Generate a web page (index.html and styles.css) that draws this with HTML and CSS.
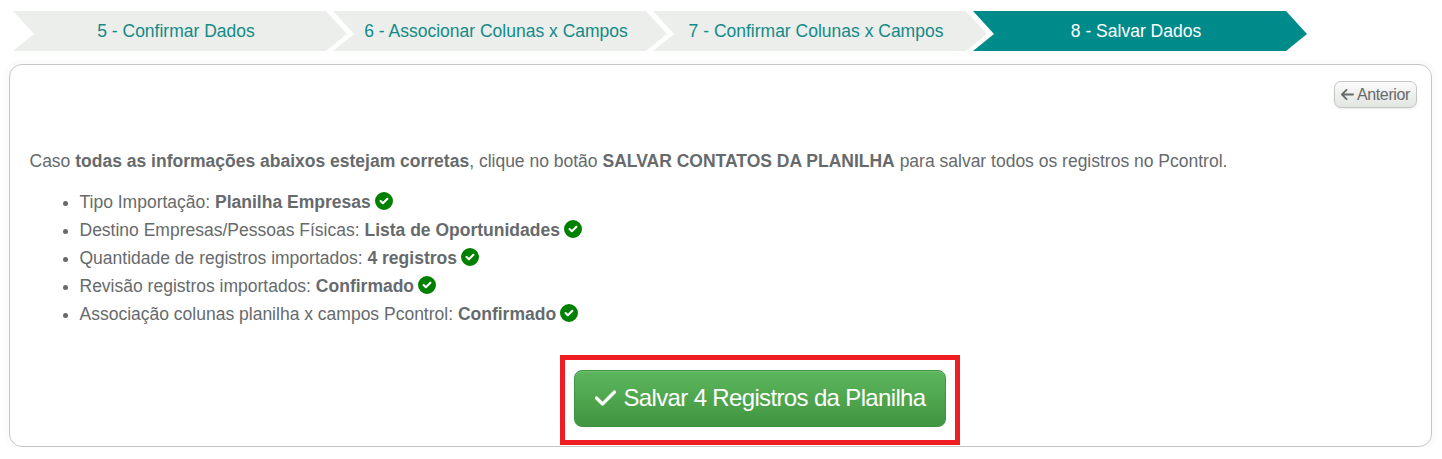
FILE: index.html
```html
<!DOCTYPE html>
<html lang="pt-BR">
<head>
<meta charset="utf-8">
<title>Importar planilha</title>
<link rel="stylesheet" href="styles.css">
</head>
<body>
<svg class="sprite" aria-hidden="true">
  <symbol id="circle-check" viewBox="0 0 512 512"><path d="M256 512a256 256 0 1 0 0-512 256 256 0 1 0 0 512zM374 214L246 342c-12 12-31 12-43 0l-66-66c-12-12-12-31 0-43s31-12 43 0l45 45L331 171c12-12 31-12 43 0s12 31 0 43z"/></symbol>
  <symbol id="check" viewBox="0 0 448 512"><path stroke="currentColor" stroke-width="10" d="M438.600 105.400c12.500 12.500 12.500 32.800 0 45.300l-256 256c-12.500 12.500-32.800 12.500-45.300 0l-128-128c-12.500-12.500-12.500-32.800 0-45.300s32.800-12.500 45.300 0L160 338.700 393.400 105.400c12.500-12.500 32.800-12.500 45.300 0z"/></symbol>
  <symbol id="arrow-left" viewBox="0 0 448 512"><path d="M9.400 233.400c-12.500 12.500-12.500 32.800 0 45.300l160 160c12.500 12.500 32.800 12.500 45.300 0s12.500-32.800 0-45.300L109.200 288 416 288c17.700 0 32-14.300 32-32s-14.300-32-32-32l-306.700 0L214.600 118.600c12.500-12.500 12.500-32.800 0-45.300s-32.800-12.500-45.300 0l-160 160z"/></symbol>
</svg>
<nav class="steps">
  <div class="step">5 - Confirmar Dados</div>
  <div class="step">6 - Associonar Colunas x Campos</div>
  <div class="step">7 - Confirmar Colunas x Campos</div>
  <div class="step step-active">8 - Salvar Dados</div>
</nav>
<main class="panel">
  <div class="toolbar">
    <button class="btn-back"><svg class="icon-arrow"><use href="#arrow-left"/></svg>Anterior</button>
  </div>
  <p class="intro">Caso <b>todas as informações abaixos estejam corretas</b>, clique no botão <b>SALVAR CONTATOS DA PLANILHA</b> para salvar todos os registros no Pcontrol.</p>
  <ul class="summary">
    <li>Tipo Importação: <b>Planilha Empresas</b> <svg class="icon-ok"><use href="#circle-check"/></svg></li>
    <li>Destino Empresas/Pessoas Físicas: <b>Lista de Oportunidades</b> <svg class="icon-ok"><use href="#circle-check"/></svg></li>
    <li>Quantidade de registros importados: <b>4 registros</b> <svg class="icon-ok"><use href="#circle-check"/></svg></li>
    <li>Revisão registros importados: <b>Confirmado</b> <svg class="icon-ok"><use href="#circle-check"/></svg></li>
    <li>Associação colunas planilha x campos Pcontrol: <b>Confirmado</b> <svg class="icon-ok"><use href="#circle-check"/></svg></li>
  </ul>
  <div class="highlight">
    <button class="btn-save"><svg class="icon-check"><use href="#check"/></svg>Salvar 4 Registros da Planilha</button>
  </div>
</main>
</body>
</html>
```
FILE: styles.css
```css
* { box-sizing: border-box; }
body {
  margin: 0;
  padding: 11px 10px 0 9px;
  background: #fff;
  color: #666a6c;
  font: 17.5px/28px "Liberation Sans", Arial, sans-serif;
}
svg { fill: currentColor; }
.sprite { display: none; }
.steps { display: flex; margin-left: 4px; }
.step {
  flex: none;
  width: 334px;
  height: 40px;
  margin-right: -14px;
  padding-right: 8px;
  background: #ebeeeb;
  color: #138a87;
  line-height: 40px;
  text-align: center;
  white-space: nowrap;
  clip-path: polygon(0 0, 313px 0, 334px 23px, 313px 100%, 0 100%, 21px 23px);
}
.step-active { background: #008b8b; color: #fff; }
.panel {
  height: 383px;
  margin-top: 13px;
  padding: 16px 14px 0 19.5px;
  border: 1px solid #c5c5c5;
  border-radius: 13px;
  box-shadow: 0 0 0 4px #fafbfa;
}
.toolbar { display: flex; justify-content: flex-end; }
.btn-back {
  display: flex;
  align-items: center;
  justify-content: center;
  gap: 3px;
  width: 83px;
  height: 27px;
  padding: 0;
  border: 1px solid #c4c7c4;
  border-radius: 7px;
  background: linear-gradient(#fafbfa, #e2e5e2);
  box-shadow: 0 1px 2px #e8e8e8;
  color: #666a6c;
  font: 16px/25px "Liberation Sans", Arial, sans-serif;
  letter-spacing: -0.35px;
}
.icon-arrow { width: 13px; height: 15px; }
.intro { margin: 39px 0 13px; white-space: nowrap; }
.summary { margin: 0; padding: 0 0 0 50px; }
.icon-ok { width: 18px; height: 18px; margin-left: -0.5px; color: #008000; vertical-align: -2px; }
.highlight {
  width: 400px;
  height: 90px;
  margin: 27px 0 0 530.5px;
  padding: 10px 9px;
  border: 5px solid #ee1c23;
}
.btn-save {
  display: flex;
  align-items: center;
  justify-content: center;
  gap: 7px;
  width: 372px;
  height: 57px;
  padding: 0 0 1px 1px;
  border: 1px solid #3d943f;
  border-radius: 8px;
  background: linear-gradient(#5cb65c, #419641);
  box-shadow: inset 0 1px 0 #72bf72;
  color: #fff;
  font: 24px/54px "Liberation Sans", Arial, sans-serif;
  letter-spacing: -0.65px;
  white-space: nowrap;
}
.icon-check { width: 21px; height: 24px; overflow: visible; }
```
